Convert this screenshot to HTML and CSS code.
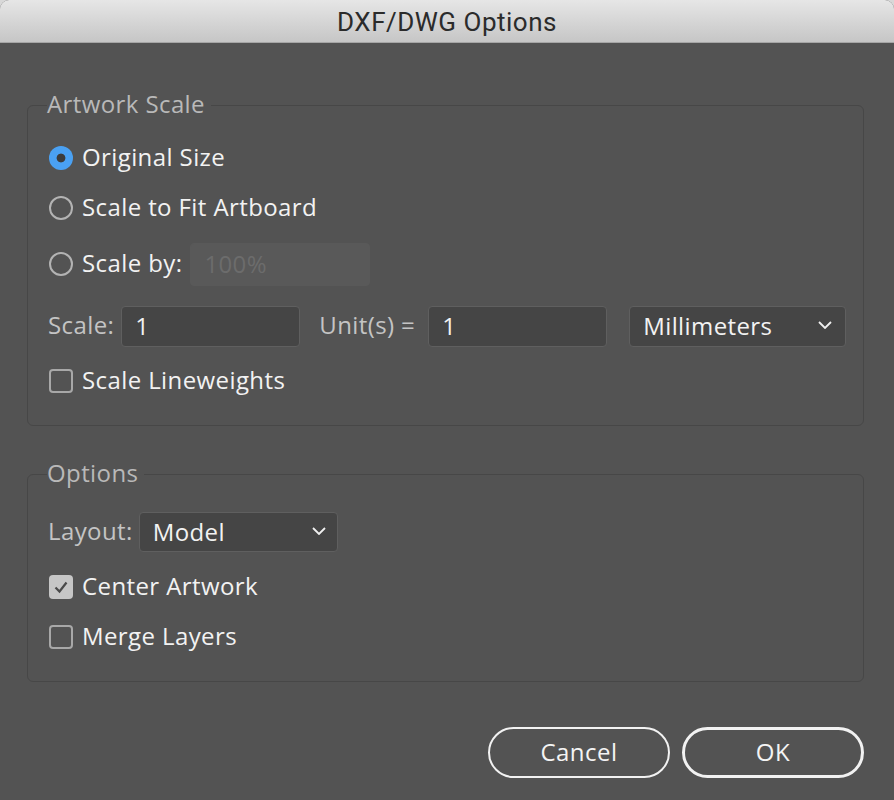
FILE: index.html
```html
<!DOCTYPE html>
<html>
<head>
<meta charset="utf-8">
<link rel="stylesheet" href="styles.css">
</head>
<body>
<div class="dialog">
  <div class="titlebar">DXF/DWG Options</div>
  <div class="content">
    <fieldset class="group group-scale">
      <legend>Artwork Scale</legend>
      <div class="row r1">
        <span class="radio checked"></span><span class="opt">Original Size</span>
      </div>
      <div class="row r2">
        <span class="radio"></span><span class="opt">Scale to Fit Artboard</span>
      </div>
      <div class="row r3">
        <span class="radio"></span><span class="opt">Scale by:</span>
        <span class="field disabled w-scaleby">100%</span>
      </div>
      <div class="row r4">
        <span class="lbl">Scale:</span>
        <span class="field w-scale">1</span>
        <span class="lbl lbl-unit">Unit(s) =</span>
        <span class="field w-unit">1</span>
        <span class="select w-mm">Millimeters<svg class="chev" viewBox="0 0 14 8" width="14" height="8"><path d="M1 1 L7 7 L13 1" fill="none" stroke="#f0f0f0" stroke-width="1.8"/></svg></span>
      </div>
      <div class="row r5">
        <span class="check"></span><span class="opt">Scale Lineweights</span>
      </div>
    </fieldset>

    <fieldset class="group group-opts">
      <legend>Options</legend>
      <div class="row o1">
        <span class="lbl">Layout:</span>
        <span class="select w-layout">Model<svg class="chev" viewBox="0 0 14 8" width="14" height="8"><path d="M1 1 L7 7 L13 1" fill="none" stroke="#f0f0f0" stroke-width="1.8"/></svg></span>
      </div>
      <div class="row o2">
        <span class="check checked"><svg viewBox="0 0 24 24" width="24" height="24"><path d="M6.5 12.5 L10.5 16.5 L17.5 7.5" fill="none" stroke="#4a4a4a" stroke-width="2.2"/></svg></span><span class="opt">Center Artwork</span>
      </div>
      <div class="row o3">
        <span class="check"></span><span class="opt">Merge Layers</span>
      </div>
    </fieldset>

    <div class="buttons">
      <button class="btn">Cancel</button>
      <button class="btn primary">OK</button>
    </div>
  </div>
</div>
</body>
</html>
```

FILE: styles.css
```css
html, body {
  margin: 0;
  padding: 0;
  background: #d8d8d8;
}
body {
  font-family: "Open Sans", "Noto Sans", sans-serif;
  font-weight: 500;
  letter-spacing: 0.4px;
}
.dialog {
  width: 894px;
  height: 800px;
  background: #535353;
  border-radius: 9px 9px 0 0;
  overflow: hidden;
}
.titlebar {
  height: 42px;
  border-bottom: 1px solid #a6a6a6;
  background: linear-gradient(#e6e6e6, #c6c6c6);
  color: #2b2b2b;
  font-family: "Roboto", "Liberation Sans", sans-serif;
  font-weight: 400;
  font-size: 26px;
  letter-spacing: 0.5px;
  line-height: 44px;
  text-align: center;
}
.content {
  padding: 50px 30px 0 27px;
}
.group {
  margin: 0;
  padding: 0 0 20px 20px;
  border: 1px solid #474747;
  border-radius: 6px;
  min-width: 0;
}
.group legend {
  padding: 0;
  margin-left: -1px;
  padding-right: 6px;
  color: #b9b9b9;
  font-size: 24px;
  line-height: 22px;
  height: 24px;
}
.group-scale legend { margin-bottom: 16px; }
.group-opts { margin-top: 36px; padding-bottom: 24px; }
.group-opts legend { margin-bottom: 21px; }

.row {
  display: flex;
  align-items: center;
}
.r1, .r2 { height: 50px; }
.r3, .r4 { height: 62px; }
.r5 { height: 48px; }
.o1 { height: 50px; }
.o2 { height: 60px; }
.o3 { height: 40px; }

.opt {
  color: #f2f2f2;
  font-size: 24px;
  line-height: 30px;
  padding-bottom: 2px;
  margin-left: 9px;
}
.lbl {
  color: #c4c4c4;
  font-size: 24px;
  line-height: 30px;
  padding-bottom: 2px;
}
.radio {
  width: 24px;
  height: 24px;
  box-sizing: border-box;
  border: 2px solid #b3b3b3;
  border-radius: 50%;
  margin-left: 1px;
  flex: none;
}
.radio.checked {
  border: none;
  background: radial-gradient(circle, #3c3c3c 0 4px, #4aa1f3 4.8px);
}
.check {
  width: 24px;
  height: 24px;
  box-sizing: border-box;
  border: 2px solid #a8a8a8;
  border-radius: 4px;
  margin-left: 1px;
  flex: none;
  display: flex;
}
.check.checked {
  border: none;
  background: #c6c6c6;
}
.field, .select {
  box-sizing: border-box;
  height: 41px;
  background: #454545;
  border: 1px solid #5f5f5f;
  border-radius: 4px;
  color: #f2f2f2;
  font-size: 24px;
  padding-left: 13px;
  padding-bottom: 2px;
  display: flex;
  align-items: center;
}
.field.disabled {
  background: #595959;
  border-color: #595959;
  color: #6c6c6c;
  height: 43px;
}
.w-scaleby { width: 180px; margin-left: 8px; }
.w-scale { width: 179px; margin-left: 7px; }
.lbl-unit { margin-left: 19px; }
.w-unit { width: 179px; margin-left: 13px; }
.w-mm { width: 217px; margin-left: 22px; justify-content: space-between; padding-right: 13px; }
.w-layout { width: 199px; height: 40px; margin-left: 6px; justify-content: space-between; padding-right: 11px; }
.chev { flex: none; }

.buttons {
  display: flex;
  justify-content: flex-end;
  gap: 12px;
  margin-top: 45px;
}
.btn {
  box-sizing: border-box;
  width: 182px;
  height: 51px;
  border-radius: 26px;
  border: 2px solid #f2f2f2;
  background: transparent;
  color: #f4f4f4;
  font-family: "Open Sans", "Noto Sans", sans-serif;
  font-weight: 500;
  font-size: 24px;
  letter-spacing: 0.5px;
  padding: 0 0 2px;
}
.btn.primary {
  border-width: 3px;
}
```
